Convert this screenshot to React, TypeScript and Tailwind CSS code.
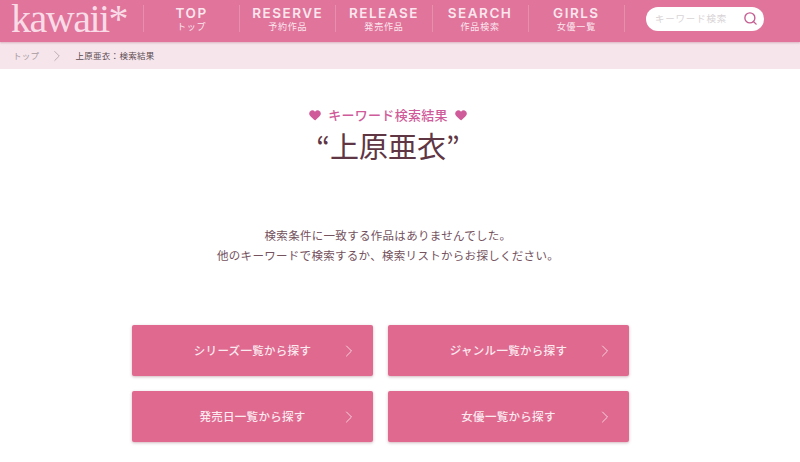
import {ChevronRight, Heart, Search} from "lucide-react"

const nav = [
  {en: "TOP", ja: "トップ"},
  {en: "RESERVE", ja: "予約作品"},
  {en: "RELEASE", ja: "発売作品"},
  {en: "SEARCH", ja: "作品検索"},
  {en: "GIRLS", ja: "女優一覧"},
]

const links = ["シリーズ一覧から探す", "ジャンル一覧から探す", "発売日一覧から探す", "女優一覧から探す"]

// HEADER **********************************************************************
function Header() {
  return (
    <header className="relative flex h-[42px] items-center bg-[#e0749b] pb-[5px] shadow-[0_1px_2px_rgba(150,60,90,0.3)]">
      <div className="h-[42px] w-[143px] shrink-0 pl-[11px] font-['Liberation_Serif',serif] text-[40px] leading-[42px] tracking-[-1.5px] whitespace-nowrap text-[#f8dbe6]">
        kawaii*
      </div>
      <nav className="flex h-[27px] border-l border-[#e88fae]">
        {nav.map((item) => (
          <div key={item.en} className="flex w-[96.2px] flex-col items-center justify-center border-r border-[#e88fae] text-[#fbe6ee]">
            <span className="font-['Inter',sans-serif] text-[13.5px] leading-[16px] font-semibold tracking-[1.5px]">{item.en}</span>
            <span className="font-['Noto_Sans_CJK_JP',sans-serif] text-[9px] leading-[11px] tracking-[0.8px]">{item.ja}</span>
          </div>
        ))}
      </nav>
      <div className="ml-[21px] flex h-[24px] w-[118px] items-center justify-between rounded-full bg-white pl-[9px] pr-[6px]">
        <span className="font-['Noto_Sans_CJK_JP',sans-serif] text-[9.5px] tracking-[0.8px] text-[#d8d3d5]">キーワード検索</span>
        <Search className="h-[15px] w-[15px] text-[#c55e92]" strokeWidth={2.2} />
      </div>
    </header>
  )
}

// BREADCRUMB ******************************************************************
function Breadcrumb() {
  return (
    <div className="flex h-[27px] items-center bg-[#f6e6ec] pl-[13px] font-['Noto_Sans_CJK_JP',sans-serif] text-[8.5px] tracking-[0.3px]">
      <span className="text-[#a89a9f]">トップ</span>
      <ChevronRight className="ml-[9px] h-[18px] w-[18px] text-[#a89a9f]" strokeWidth={1} />
      <span className="ml-[9px] text-[#5d4a50]">上原亜衣：検索結果</span>
    </div>
  )
}

// MAIN ************************************************************************
function Results() {
  return (
    <main className="flex flex-col items-center bg-white pr-[24px] font-['Noto_Sans_CJK_JP',sans-serif]">
      <div className="mt-[36px] flex h-[20px] items-center gap-[6px] text-[13px] font-medium tracking-[0.3px] text-[#cf5b9a]">
        <Heart className="h-[14px] w-[14px] fill-[#cf5b9a]" strokeWidth={0} />
        <span>キーワード検索結果</span>
        <Heart className="h-[14px] w-[14px] fill-[#cf5b9a]" strokeWidth={0} />
      </div>
      <h1 className="text-[29px] leading-[40px] font-normal text-[#5f3643]">“上原亜衣”</h1>
      <div className="mt-[60px] flex flex-col items-center text-[11.5px] leading-[20px] tracking-[0.3px] text-[#74525e]">
        <p>検索条件に一致する作品はありませんでした。</p>
        <p>他のキーワードで検索するか、検索リストからお探しください。</p>
      </div>
      <div className="mt-[60px] mr-[15px] grid grid-cols-[241px_241px] gap-x-[15px] gap-y-[15px]">
        {links.map((label) => (
          <div key={label} className="relative flex h-[51px] items-center justify-center rounded-[2px] bg-[#e0698f] shadow-[0_1px_3px_rgba(120,50,70,0.35)]">
            <span className="text-[11.5px] font-medium tracking-[0.3px] text-[#fbeaf0]">{label}</span>
            <ChevronRight className="absolute right-[14px] top-[16px] h-[20px] w-[20px] text-[#f6d3df]" strokeWidth={1.2} />
          </div>
        ))}
      </div>
    </main>
  )
}

// ROOT ************************************************************************
export default function App() {
  return (
    <div className="h-[462px] w-[800px] overflow-hidden bg-white">
      <Header />
      <Breadcrumb />
      <Results />
    </div>
  )
}
